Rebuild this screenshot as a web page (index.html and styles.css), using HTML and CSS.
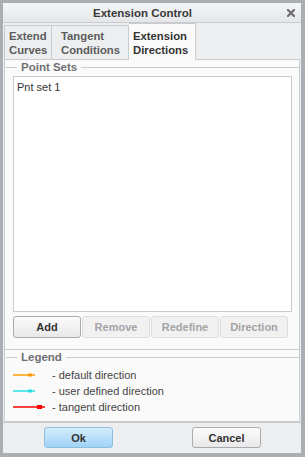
FILE: index.html
```html
<!DOCTYPE html>
<html lang="en">
<head>
    <meta charset="UTF-8">
    <title>Extension Control</title>
    <link rel="stylesheet" href="styles.css">
</head>
<body>
    <div class="window">
        <div class="titlebar">
            <div class="title">Extension Control</div>
            <div class="close">
                <svg width="8" height="8" viewBox="0 0 8 8">
                    <path d="M1 1 L7 7 M7 1 L1 7" stroke="#6c6d72" stroke-width="2.2" stroke-linecap="square"/>
                </svg>
            </div>
        </div>
        <div class="tabs">
            <div class="tab tab-curves">Extend<br>Curves</div>
            <div class="tab tab-tangent">Tangent<br>Conditions</div>
            <div class="tab tab-dirs active">Extension<br>Directions</div>
        </div>
        <div class="panel">
            <div class="section points">
                <div class="group-head"><span>Point Sets</span></div>
                <div class="list">
                    <div class="list-item">Pnt set 1</div>
                </div>
                <div class="btn-row">
                    <button class="btn">Add</button>
                    <button class="btn" disabled>Remove</button>
                    <button class="btn" disabled>Redefine</button>
                    <button class="btn" disabled>Direction</button>
                </div>
            </div>
            <div class="section legend">
                <div class="group-head"><span>Legend</span></div>
                <div class="legend-row">
                    <svg class="arrow" width="34" height="8" viewBox="0 0 34 8">
                        <line x1="0" y1="4" x2="22" y2="4" stroke="#ff9a00" stroke-width="1.5"/>
                        <rect x="15" y="2.5" width="4" height="3" fill="#ff9a00"/>
                    </svg>
                    <span>- default direction</span>
                </div>
                <div class="legend-row">
                    <svg class="arrow" width="34" height="8" viewBox="0 0 34 8">
                        <line x1="0" y1="4" x2="22" y2="4" stroke="#25dfe6" stroke-width="1.5"/>
                        <rect x="15" y="2.5" width="4" height="3" fill="#25dfe6"/>
                    </svg>
                    <span>- user defined direction</span>
                </div>
                <div class="legend-row">
                    <svg class="arrow" width="34" height="8" viewBox="0 0 34 8">
                        <line x1="0" y1="4" x2="32" y2="4" stroke="#ff0000" stroke-width="1.5"/>
                        <rect x="24" y="2" width="5" height="4" fill="#ff0000"/>
                    </svg>
                    <span>- tangent direction</span>
                </div>
            </div>
        </div>
        <div class="footer">
            <button class="btn btn-ok">Ok</button>
            <button class="btn">Cancel</button>
        </div>
    </div>
</body>
</html>
```

FILE: styles.css
```css
* {
    box-sizing: border-box;
}
body {
    margin: 0;
    font-family: 'Liberation Sans', Arial, sans-serif;
    font-size: 11px;
    color: #3a3a3a;
}
.window {
    width: 305px;
    height: 457px;
    background-color: #eceef0;
    border: 3px solid #aaadb1;
    border-right-width: 4px;
    border-bottom-width: 4px;
    display: flex;
    flex-direction: column;
}
.titlebar {
    height: 20px;
    display: flex;
    align-items: center;
    background: linear-gradient(#f4f5f6, #e4e6e8);
    border-bottom: 1px solid #c9cbce;
}
.title {
    flex: 1;
    text-align: center;
    font-weight: bold;
    font-size: 11.5px;
    color: #3a3a3a;
}
.close {
    width: 19px;
    display: flex;
    justify-content: center;
    align-items: center;
    padding-right: 2px;
}
.tabs {
    height: 36px;
    display: flex;
    align-items: flex-end;
    padding-left: 1px;
    position: relative;
    z-index: 1;
}
.tab {
    height: 34px;
    padding-top: 3px;
    line-height: 14px;
    font-weight: bold;
    font-size: 11.3px;
    color: #5c5c5c;
    border: 1px solid #c9cbce;
    border-bottom: none;
    background-color: #eceef0;
}
.tab-curves {
    width: 48px;
    padding-left: 4px;
}
.tab-tangent {
    width: 77px;
    padding-left: 9px;
    border-left: none;
}
.tab-dirs {
    width: 67px;
    padding-left: 4px;
}
.tab.active {
    height: 37px;
    margin-bottom: -1px;
    padding-top: 5px;
    color: #333;
    background-color: #fafafa;
    border-left: none;
}
.panel {
    flex: 1;
    margin: 0 1px;
    background-color: #fafafa;
    border: 1px solid #c9cbce;
    display: flex;
    flex-direction: column;
}
.section {
    padding: 0 7px 0 8px;
}
.points {
    padding-bottom: 11px;
}
.legend {
    flex: 1;
    border-top: 1px solid #c9cbce;
}
.group-head {
    height: 14px;
    display: flex;
    align-items: center;
    margin: 0 -7px 0 -7px;
    font-weight: bold;
    font-size: 11.5px;
    color: #707074;
}
.group-head::before,
.group-head::after {
    content: '';
    height: 1px;
    background-color: #c9cbce;
}
.group-head::before {
    width: 11px;
    margin-right: 4px;
}
.group-head::after {
    flex: 1;
    margin-left: 4px;
}
.list {
    height: 236px;
    margin-top: 2px;
    background-color: #fff;
    border: 1px solid #c9cbce;
    padding: 4px 3px;
}
.list-item {
    color: #333;
    font-size: 11px;
}
.btn-row {
    display: flex;
    gap: 1px;
    margin-top: 4px;
}
.btn {
    height: 22px;
    width: 68px;
    padding: 0;
    font-family: inherit;
    font-size: 11px;
    font-weight: bold;
    color: #333;
    background: linear-gradient(#fbfbfb, #e9e9ea);
    border: 1px solid #a9abae;
    border-radius: 3px;
}
.btn:disabled {
    color: #a3a4a6;
    background: #f1f1f2;
    border-color: #dcdddf;
}
.legend-row {
    height: 16px;
    display: flex;
    align-items: center;
    gap: 5px;
    color: #444;
    font-size: 11px;
}
.legend .group-head {
    margin-bottom: 3px;
}
.footer {
    height: 31px;
    border-top: 1px solid #c9cbce;
    display: flex;
    align-items: flex-start;
    padding: 4px 0 0 41px;
    gap: 79px;
}
.footer .btn {
    height: 21px;
    width: 69px;
}
.btn-ok {
    background: linear-gradient(#d4ecfc, #9fd3f6);
    border-color: #8fbddc;
}
```
